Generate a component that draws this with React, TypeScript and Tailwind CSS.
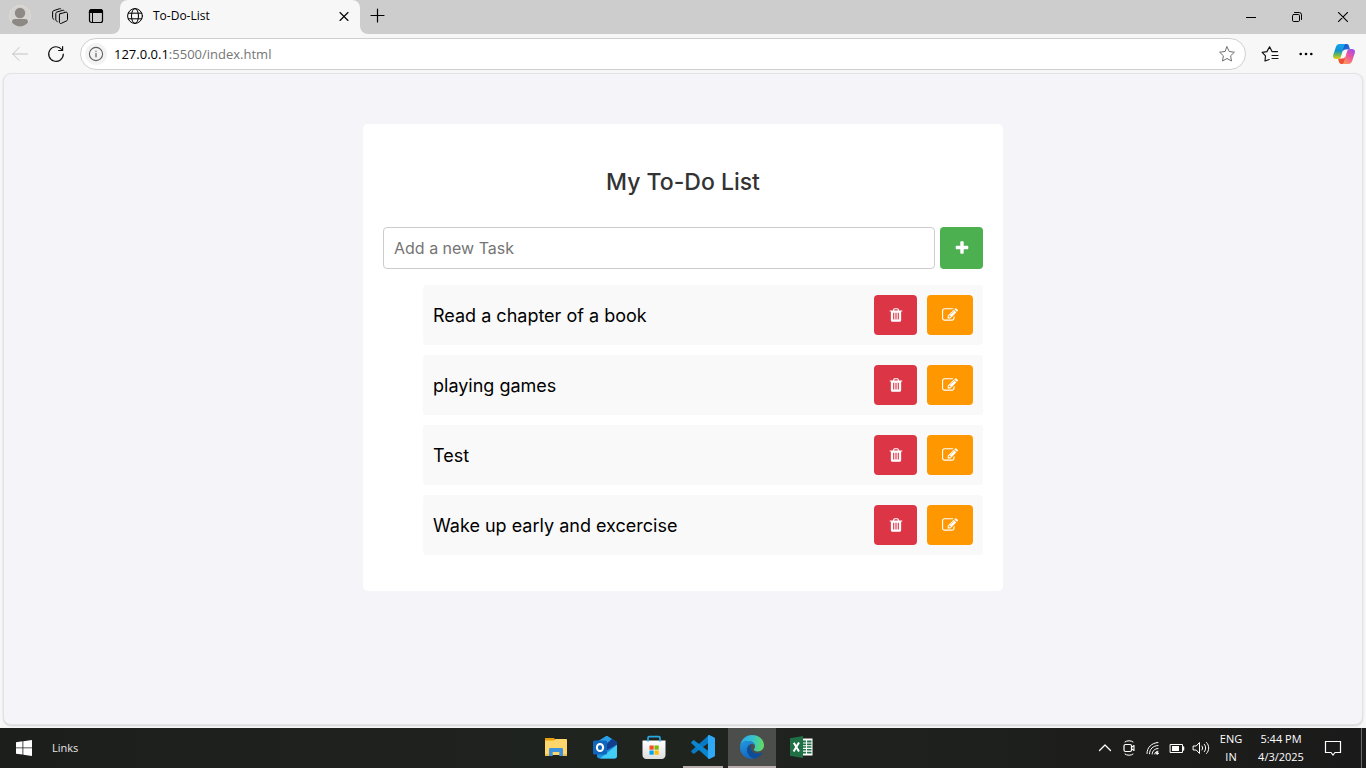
import { useState } from "react";
import type { ReactNode } from "react";

const UI_FONT = "font-['Segoe_UI','Open_Sans',sans-serif]";

function GlyphIcon({ d }: { d: string }) {
  return (
    <svg viewBox="0 0 1792 1792" className="size-4 fill-current" aria-hidden="true">
      <path d={d} />
    </svg>
  );
}

const PLUS =
  "M1600 736v192q0 40-28 68t-68 28h-416v416q0 40-28 68t-68 28h-192q-40 0-68-28t-28-68v-416h-416q-40 0-68-28t-28-68v-192q0-40 28-68t68-28h416v-416q0-40 28-68t68-28h192q40 0 68 28t28 68v416h416q40 0 68 28t28 68z";
const TRASH =
  "M704 1376v-704q0-14-9-23t-23-9h-64q-14 0-23 9t-9 23v704q0 14 9 23t23 9h64q14 0 23-9t9-23zm256 0v-704q0-14-9-23t-23-9h-64q-14 0-23 9t-9 23v704q0 14 9 23t23 9h64q14 0 23-9t9-23zm256 0v-704q0-14-9-23t-23-9h-64q-14 0-23 9t-9 23v704q0 14 9 23t23 9h64q14 0 23-9t9-23zm-544-992h448l-48-117q-7-9-17-11h-317q-10 2-17 11zm928 32v64q0 14-9 23t-23 9h-96v948q0 83-47 143.5t-113 60.5h-832q-66 0-113-58.5t-47-141.5v-952h-96q-14 0-23-9t-9-23v-64q0-14 9-23t23-9h309l70-167q15-37 54-63t79-26h320q40 0 79 26t54 63l70 167h309q14 0 23 9t9 23z";
const EDIT =
  "M888 1184l116-116-152-152-116 116v56h96v96h56zm440-720q-16-16-33 1l-350 350q-17 17-1 33t33-1l350-350q17-17 1-33zm80 594v190q0 119-84.5 203.5t-203.5 84.5h-832q-119 0-203.5-84.5t-84.5-203.5v-832q0-119 84.5-203.5t203.5-84.5h832q63 0 117 25 15 7 18 23 3 17-9 29l-49 49q-14 14-32 8-23-6-45-6h-832q-66 0-113 47t-47 113v832q0 66 47 113t113 47h832q66 0 113-47t47-113v-126q0-13 9-22l64-64q15-15 35-7t20 29zm-96-738l288 288-672 672h-288v-288zm444 132l-92 92-288-288 92-92q28-28 68-28t68 28l152 152q28 28 28 68t-28 68z";

function LineIcon({ children, className = "size-4", box = 16 }: { children: ReactNode; className?: string; box?: number }) {
  return (
    <svg
      viewBox={`0 0 ${box} ${box}`}
      className={`shrink-0 ${className}`}
      fill="none"
      stroke="currentColor"
      strokeLinecap="round"
      strokeLinejoin="round"
      aria-hidden="true"
    >
      {children}
    </svg>
  );
}

function IconButton({ label, className = "", children }: { label: string; className?: string; children: ReactNode }) {
  return (
    <button type="button" aria-label={label} className={`flex shrink-0 items-center justify-center ${className}`}>
      {children}
    </button>
  );
}

function TabStrip() {
  return (
    <header className="flex h-[34px] bg-[linear-gradient(#cdcdcd_50%,#f7f7f7_50%)] text-black">
      <div className="flex w-[120px] items-center rounded-br-lg bg-[#cdcdcd] pb-0.5 pl-0.5">
        <IconButton label="Profile" className="w-9">
          <svg viewBox="0 0 22 22" className="size-[22px]" aria-hidden="true">
            <circle cx="11" cy="11" r="10.5" fill="#d5d2cf" stroke="#dedbd8" />
            <circle cx="11" cy="8" r="5.2" fill="#8d8985" />
            <path d="M2.9 17.2c0-2 1.3-3.2 3.2-3.2h9.8c1.900 0 3.200 1.200 3.200 3.200-1.800 2.600-4.800 4.300-8.100 4.300s-6.300-1.700-8.100-4.300z" fill="#8d8985" />
          </svg>
        </IconButton>
        <IconButton label="Workspaces" className="w-11">
          <LineIcon className="size-[18px]" box={18}>
            <path d="M9 6.800l5.800-1.600c.9-.2 1.700.4 1.700 1.300v6c0 .7-.4 1.200-1 1.400l-5.300 2.500c-.9.400-1.800-.2-1.800-1.200V8c0-.6.200-1 .6-1.200z" />
            <path d="M6.300 14.500l-.9-.6c-.4-.2-.6-.6-.6-1V6.500c0-.6.400-1.200 1-1.400l6-1.800c.5-.2 1 0 1.300.3" />
            <path d="M3 12.500l-.800-.7c-.4-.300-.6-.700-.6-1.100V5c0-.6.4-1.100 1-1.300L8.600 1.700c.5-.1.900 0 1.200.2" />
          </LineIcon>
        </IconButton>
        <IconButton label="Tab actions" className="w-7">
          <LineIcon>
            <rect x="1.500" y="1.500" width="13" height="13" rx="2" strokeWidth="1.200" />
            <path d="M1.500 3.500a2 2 0 0 1 2-2h9a2 2 0 0 1 2 2v1h-13z" fill="currentColor" />
            <path d="M4.500 5v9.300" />
          </LineIcon>
        </IconButton>
      </div>
      <div className="flex w-60 items-center rounded-t-lg bg-[#f7f7f7] pb-0.5 pl-[7px] pr-2">
        <LineIcon>
          <circle cx="8" cy="8" r="7.400" />
          <ellipse cx="8" cy="8" rx="3.500" ry="7.400" />
          <path d="M1.300 5.200h13.400M1.300 10.800h13.400" />
        </LineIcon>
        <span className={`flex-1 pl-2.5 text-[12px] leading-4 ${UI_FONT}`}>To-Do-List</span>
        <IconButton label="Close tab" className="size-4">
          <LineIcon>
            <path d="M4 4.500l8 8M12 4.500l-8 8" strokeWidth="1.100" />
          </LineIcon>
        </IconButton>
      </div>
      <div className="flex flex-1 items-center justify-between rounded-bl-lg bg-[#cdcdcd]">
        <IconButton label="New tab" className="ml-2.5 size-4 pb-0.5">
          <LineIcon>
            <path d="M7.500 1v13M1 7.500h13" strokeWidth="1.200" />
          </LineIcon>
        </IconButton>
        <div className="flex">
          <IconButton label="Minimize" className="h-8 w-[46px]">
            <svg viewBox="0 0 10 10" className="size-2.5" aria-hidden="true">
              <path d="M0 5.500h10" stroke="#000" />
            </svg>
          </IconButton>
          <IconButton label="Restore" className="h-8 w-[46px]">
            <LineIcon className="size-2.5" box={10}>
              <rect x=".5" y="2.500" width="7" height="7" rx="1.200" />
              <path d="M2.500.5h4.700a2.300 2.300 0 0 1 2.300 2.300v4.700" />
            </LineIcon>
          </IconButton>
          <IconButton label="Close" className="h-8 w-[46px]">
            <LineIcon className="size-2.5" box={10}>
              <path d="M.3.3l9.400 9.400M9.700.3L.3 9.700" strokeWidth="1.100" />
            </LineIcon>
          </IconButton>
        </div>
      </div>
    </header>
  );
}

function CopilotLogo() {
  return (
    <svg viewBox="0 0 22 20" className="h-5 w-[22px]" aria-hidden="true">
      <defs>
        <linearGradient id="cpA" x1="0" y1="0" x2="0" y2="1">
          <stop offset="0" stopColor="#14a5f3" />
          <stop offset=".45" stopColor="#1292ce" />
          <stop offset=".75" stopColor="#76bd4b" />
          <stop offset="1" stopColor="#f2cc12" />
        </linearGradient>
        <linearGradient id="cpB" x1=".8" y1="0" x2=".2" y2="1">
          <stop offset="0" stopColor="#a24cf0" />
          <stop offset=".45" stopColor="#ec569d" />
          <stop offset="1" stopColor="#ff9a58" />
        </linearGradient>
        <linearGradient id="cpC" x1="0" y1="0" x2="1" y2="1">
          <stop offset="0" stopColor="#1b4cc0" />
          <stop offset="1" stopColor="#237fe9" />
        </linearGradient>
      </defs>
      <path d="M11.500 0h2.300c1.200 0 1.900.8 2.200 1.900L17 5.500h-3.500c-1.500 0-2.300.8-2.700 2.200L9 6z" fill="url(#cpC)" />
      <path d="M10.500 20H8.200c-1.200 0-1.900-.8-2.200-1.900L5 14.500h3.500c1.500 0 2.300-.8 2.700-2.200L13 14z" fill="#ee5038" />
      <path d="M6.500 0h6.800c-1.200 0-1.800.9-2.200 2.100L8 12.400c-.5 1.600-1.400 2.600-3 2.600H3c-2.300 0-3.400-1.500-2.800-3.900L2.700 3.500C3.400 1.300 4.500 0 6.500 0z" fill="url(#cpA)" />
      <path d="M15.500 20H8.700c1.200 0 1.800-.9 2.200-2.100L14 7.600c.5-1.600 1.400-2.600 3-2.600h2c2.300 0 3.400 1.500 2.800 3.900l-2.500 7.600c-.7 2.200-1.800 3.500-3.800 3.500z" fill="url(#cpB)" />
      <path d="M11.300 5.800h3.200c-.6.500-.9 1.200-1.200 2.200l-1.900 6.200H7.300c.7-.4 1-1.100 1.300-2l1.700-5.400c.2-.6.500-1 1-1z" fill="#f7f7f7" />
    </svg>
  );
}

function Toolbar() {
  return (
    <nav aria-label="Browser" className="flex items-center bg-[#f7f7f7] pb-[3px] pl-0.5 pr-1 pt-1 text-[#111]">
      <IconButton label="Back" className="w-9 text-[#c3c3c3]">
        <LineIcon>
          <path d="M15.500 8H.8M7.200 1.500L.7 8l6.500 6.500" />
        </LineIcon>
      </IconButton>
      <IconButton label="Refresh" className="mr-1.5 w-9">
        <LineIcon className="size-[18px]" box={18}>
          <path d="M16.300 9A7.300 7.300 0 1 1 14.700 4.500M15.600 1.500v4h-4" strokeWidth="1.200" />
        </LineIcon>
      </IconButton>
      <div className="flex h-8 flex-1 items-center rounded-full border border-[#cfcfcf] bg-white pl-1 pr-2.5">
        <IconButton label="Site information" className="size-[22px] rounded-full bg-[#f3f3f3] text-[#616161]">
          <LineIcon>
            <circle cx="8" cy="8" r="6.600" strokeWidth="1.100" />
            <path d="M8 7.300v3.500M8 5v.3" strokeWidth="1.200" />
          </LineIcon>
        </IconButton>
        <div className={`flex-1 pl-[7px] text-[13px] leading-5 text-[#767676] ${UI_FONT}`}>
          <span className="text-black">127.0.0.1</span>:5500/index.html
        </div>
        <IconButton label="Add to favorites" className="size-4 text-[#707070]">
          <LineIcon className="size-4">
            <path d="M8 .8l2.200 4.700 5.200.7-3.800 3.600.9 5.200L8 12.500 3.500 15l.9-5.200L.6 6.200l5.200-.7z" />
          </LineIcon>
        </IconButton>
      </div>
      <div className="ml-1.5 flex">
        <IconButton label="Favorites" className="w-9">
          <LineIcon className="size-[18px]" box={18}>
            <path d="M8.200 14.500L4 16l.5-5.200L1.200 7.300l4.700-.7 2.700-4.800 2.400 4.800h5.500M11 10.500h6M11 13.500h6" strokeWidth="1.200" />
          </LineIcon>
        </IconButton>
        <IconButton label="Settings and more" className="w-9">
          <svg viewBox="0 0 16 16" className="size-4" aria-hidden="true">
            <circle cx="2.700" cy="8" r="1.300" />
            <circle cx="8" cy="8" r="1.300" />
            <circle cx="13.300" cy="8" r="1.300" />
          </svg>
        </IconButton>
        <IconButton label="Copilot" className="ml-0.5 w-9">
          <CopilotLogo />
        </IconButton>
      </div>
    </nav>
  );
}

function TodoApp() {
  const [tasks, setTasks] = useState(["Read a chapter of a book", "playing games", "Test", "Wake up early and excercise"]);
  const [draft, setDraft] = useState("");

  const addTask = () => {
    if (draft.trim()) {
      setTasks([...tasks, draft.trim()]);
      setDraft("");
    }
  };

  return (
    <main className="mx-[3px] mb-[3px] flex-1 rounded-lg border border-[#e3e3e5] bg-[#f4f4f9] pb-12 pt-[50px] shadow-[0_1px_2px_rgba(0,0,0,0.15)] font-['Inter',sans-serif]">
      <section className="mx-auto max-w-[640px] rounded-[5px] bg-white px-5 pb-9 pt-11">
        <h1 className="text-center text-[23px] leading-[29px] font-medium text-[#333]">My To-Do List</h1>
        <form
          className="mt-[30px] flex gap-[5px]"
          onSubmit={(e) => {
            e.preventDefault();
            addTask();
          }}
        >
          <input
            type="text"
            aria-label="Add a new Task"
            placeholder="Add a new Task"
            value={draft}
            onChange={(e) => setDraft(e.target.value)}
            className="h-[42px] min-w-0 flex-1 rounded border border-[#ccc] bg-white px-2.5 text-base text-black placeholder:text-[#757575]"
          />
          <button type="submit" aria-label="Add task" className="flex w-[43px] items-center justify-center rounded bg-[#4caf50] text-white">
            <GlyphIcon d={PLUS} />
          </button>
        </form>
        <ul className="mt-4 flex flex-col gap-2.5 pl-10">
          {tasks.map((task, i) => (
            <li key={i} className="flex items-center gap-2.5 rounded bg-[#f9f9f9] p-2.5">
              <span className="flex-1 pt-0.5 text-lg leading-6 text-black">{task}</span>
              <button
                type="button"
                aria-label={`Delete ${task}`}
                onClick={() => setTasks(tasks.filter((_, n) => n !== i))}
                className="flex h-10 w-[43px] items-center justify-center rounded bg-[#dc3545] text-white"
              >
                <GlyphIcon d={TRASH} />
              </button>
              <button type="button" aria-label={`Edit ${task}`} className="flex h-10 w-[46px] items-center justify-center rounded bg-[#ff9800] text-white">
                <GlyphIcon d={EDIT} />
              </button>
            </li>
          ))}
        </ul>
      </section>
    </main>
  );
}

function ExplorerLogo() {
  return (
    <svg viewBox="0 0 24 24" className="size-6" aria-hidden="true">
      <path d="M1 3.500C1 3 1.500 3 2 3h8l1.500 2H22c.5 0 1 .3 1 1v3H1z" fill="#e8a00c" />
      <path d="M1 5.500h9L11.500 4H22c.6 0 1 .4 1 1v15H1z" fill="#ffd66b" />
      <path d="M5 21v-6.500c0-.8.500-1.500 1.500-1.500h11c1 0 1.500.7 1.500 1.500V21h-3.700v-4H8.700v4z" fill="#3f93dc" />
      <path d="M1 19h4v2H1zM19 19h4v2h-4z" fill="#f0bd45" />
    </svg>
  );
}

function OutlookLogo() {
  return (
    <svg viewBox="0 0 26 26" className="size-[26px]" aria-hidden="true">
      <path d="M5 8l8.500-5.500c1-.6 1.500-.6 2.500 0L25 8v6L15 19 5 12z" fill="#1878cf" />
      <path d="M6 7.300l7.500-4.800c1-.6 1.500-.6 2.500 0l4 2.400L10 12z" fill="#2a9fe6" />
      <path d="M20 5l5 3v5l-10 6-6-3.500z" fill="#123f8d" />
      <path d="M5 14l8 3.500L25 10.500V22c0 1.500-1 2.500-2.500 2.500h-15C6 24.500 5 23.500 5 22z" fill="#1c8fe0" />
      <path d="M8 24.500L25 11v11c0 1.500-1 2.500-2.500 2.500z" fill="#42cdf5" />
      <rect x="1" y="6.500" width="14" height="14" rx="1.500" fill="#1066bd" />
      <ellipse cx="8" cy="13.500" rx="3.100" ry="3.600" fill="none" stroke="#fff" strokeWidth="2" />
    </svg>
  );
}

function StoreLogo() {
  return (
    <svg viewBox="0 0 26 26" className="size-[26px]" aria-hidden="true">
      <defs>
        <linearGradient id="bag" x1="0" y1="0" x2="0" y2="1">
          <stop offset="0" stopColor="#fff" />
          <stop offset="1" stopColor="#dedede" />
        </linearGradient>
      </defs>
      <path d="M1.500 6.500h23V21c0 2.300-1.400 4-4 4h-15c-2.600 0-4-1.700-4-4z" fill="url(#bag)" />
      <path d="M7 7.500V4c0-.8.500-1.300 1.300-1.300h9.400c.8 0 1.300.5 1.300 1.300v3.500" fill="none" stroke="#28a8e0" strokeWidth="1.700" />
      <path d="M8.500 11.500h4.200v4.200H8.500z" fill="#f25022" />
      <path d="M13.500 11.500h4.200v4.200h-4.200z" fill="#7fba00" />
      <path d="M8.500 16.500h4.200v4.200H8.500z" fill="#00a4ef" />
      <path d="M13.500 16.500h4.200v4.200h-4.200z" fill="#ffb900" />
    </svg>
  );
}

function VsCodeLogo() {
  return (
    <svg viewBox="0 0 24 24" className="size-6" aria-hidden="true">
      <path d="M23 2.500L18 0 .6 15.500c-.5.500-.5 1.200 0 1.700L2 18.400c.4.400 1 .4 1.400.1L22 4.500z" fill="#0879c4" />
      <path d="M23 21.500L18 24 .6 8.500c-.5-.5-.5-1.200 0-1.700L2 5.600c.4-.4 1-.4 1.400-.1L22 19.500z" fill="#0a86d0" />
      <path d="M17.500 23.800c-.7-.2-.6-.8-.6-1.500V1.700c0-.7 0-1.300.6-1.500.4-.2.700-.2 1.100 0l4.700 2.200c.5.300.7.700.7 1.200v16.800c0 .5-.2.900-.7 1.200l-4.700 2.200c-.4.200-.7.200-1.100 0z" fill="#2fa9f5" />
    </svg>
  );
}

function EdgeLogo() {
  return (
    <svg viewBox="0 0 24 24" className="size-6" aria-hidden="true">
      <defs>
        <linearGradient id="edA" x1="0" y1=".4" x2="1" y2=".5">
          <stop offset="0" stopColor="#2aa7e8" />
          <stop offset=".5" stopColor="#35c1d0" />
          <stop offset="1" stopColor="#62dc5d" />
        </linearGradient>
        <linearGradient id="edB" x1=".2" y1="0" x2=".6" y2="1">
          <stop offset="0" stopColor="#1f96df" />
          <stop offset="1" stopColor="#1565c0" />
        </linearGradient>
      </defs>
      <path d="M.2 10.600C.9 4.500 5.900 0 12 0c7 0 12 4.800 12 10.300 0 3.800-2.900 6.200-6.200 6.200-2.600 0-4-1-4-1.900 0-.8 1.200-1.300 1.200-3.200 0-2.700-2.600-5.400-6.600-5.400C4.400 6 1.500 8 .2 10.600z" fill="url(#edA)" />
      <path d="M.1 11.500C.6 8.200 3.900 6 8 6c4.300 0 7 2.700 7 5.300-.4-1.400-1.700-2.300-3.200-2.300-3 0-5.100 3.100-4.600 6.500.5 3.800 3.400 7.100 7.200 8.200C6.300 25.300-.6 19.300.1 11.500z" fill="url(#edB)" />
      <path d="M8.600 11.100c-3.300 3.300-1.300 11.100 5.800 12.600 3.500-.7 6.200-2.700 7.900-5.600.3-.5-.2-.9-.7-.6-4.600 2.300-9.700.2-10.800-3.800-.4-1.500 0-2.600.5-3.700-1.200 0-2 .4-2.700 1.100z" fill="#0d4e9b" />
    </svg>
  );
}

function ExcelLogo() {
  return (
    <svg viewBox="0 0 24 24" className="size-6" aria-hidden="true">
      <rect x="12" y="3.500" width="11.500" height="17" fill="#fff" />
      <path d="M13 5.500h9.500v13H13z" fill="#1f7145" />
      <path d="M13 8h10M13 10.700h10M13 13.400h10M13 16.100h10M17.500 5v14" stroke="#fff" strokeWidth="1.100" />
      <path d="M1 3.300L14 1v22L1 20.700z" fill="#1f7145" />
      <path d="M4.800 7.800l5.200 8.600M10 7.600L4.600 16.400" stroke="#fff" strokeWidth="2" />
    </svg>
  );
}

function TaskbarApp({ label, running = false, active = false, children }: { label: string; running?: boolean; active?: boolean; children: ReactNode }) {
  return (
    <button
      type="button"
      aria-label={label}
      className={`flex w-12 flex-col items-center ${active ? "bg-[#4c4e4c]" : ""}`}
    >
      <span className="flex flex-1 items-center">{children}</span>
      <span className={`h-0.5 ${active ? "w-full bg-[#b9adad]" : running ? "w-10 bg-[#b9adad]" : "w-10"}`} />
    </button>
  );
}

function Taskbar() {
  return (
    <footer
      className={`grid h-10 grid-cols-[1fr_auto_1fr] bg-linear-to-r from-[#1c1e1c] via-[#20241f] to-[#1b1a1a] text-[11px] leading-[18px] text-white ${UI_FONT}`}
    >
      <div className="flex items-center">
        <IconButton label="Start" className="h-10 w-12">
          <svg viewBox="0 0 16 16" className="size-4 fill-white" aria-hidden="true">
            <path d="M0 2.200l6.500-.9v6.200H0zM7.300 1.200L16 0v7.500H7.300zM0 8.300h6.500v6.200L0 13.700zM7.300 8.300H16V16l-8.700-1.300z" />
          </svg>
        </IconButton>
        <a href="#links" className="pl-1 text-[#e6e6e6]">
          Links
        </a>
      </div>
      <div className="flex gap-px pr-[9px]">
        <TaskbarApp label="File Explorer">
          <ExplorerLogo />
        </TaskbarApp>
        <TaskbarApp label="Outlook">
          <OutlookLogo />
        </TaskbarApp>
        <TaskbarApp label="Microsoft Store">
          <StoreLogo />
        </TaskbarApp>
        <TaskbarApp label="Visual Studio Code" running>
          <VsCodeLogo />
        </TaskbarApp>
        <TaskbarApp label="Microsoft Edge" active>
          <EdgeLogo />
        </TaskbarApp>
        <TaskbarApp label="Excel">
          <ExcelLogo />
        </TaskbarApp>
      </div>
      <div className="flex items-center justify-end">
        <IconButton label="Show hidden icons" className="w-6">
          <LineIcon>
            <path d="M2.500 10.500L8 5l5.500 5.500" strokeWidth="1.300" />
          </LineIcon>
        </IconButton>
        <IconButton label="Meet Now" className="w-6">
          <LineIcon>
            <path d="M4 1.900C6 .3 10 .3 12 1.900M4 14.100c2 1.600 6 1.600 8 0" />
            <rect x="3" y="4.500" width="7.500" height="7" rx="1.500" strokeWidth="1.200" />
            <path d="M10.500 7.200l2.500-1.700v5l-2.500-1.700" strokeWidth="1.100" />
          </LineIcon>
        </IconButton>
        <IconButton label="Network" className="w-6">
          <LineIcon>
            <path d="M2 13.500C2 7.500 6.500 3 13 2.500M4.500 13.800c0-4.800 3.500-8 8.500-8.300M7.200 14c0-3 2.300-5.300 5.800-5.500M9.800 14c0-1.600 1.200-2.700 3.200-2.800" strokeWidth="1" />
            <circle cx="12.200" cy="13.300" r="1" fill="currentColor" />
          </LineIcon>
        </IconButton>
        <IconButton label="Battery" className="w-6">
          <LineIcon>
            <rect x="1.500" y="4.500" width="12" height="8" />
            <path d="M14.500 7v3" strokeWidth="1.500" />
            <path d="M3 6h7v5H3z" fill="currentColor" strokeWidth="0" />
          </LineIcon>
        </IconButton>
        <IconButton label="Volume" className="w-6">
          <LineIcon className="size-[18px]" box={18}>
            <path d="M1.500 7h2.700l3.300-3.500v11L4.200 11H1.500zM10 7c.8 1 .8 3 0 4M12.300 5.300c1.800 2 1.800 5.400 0 7.400M14.500 3.500c3 3 3 8 0 11" />
          </LineIcon>
        </IconButton>
        <div className="w-9 text-center">
          <div>ENG</div>
          <div>IN</div>
        </div>
        <div className="w-16 text-center">
          <div>5:44 PM</div>
          <div>4/3/2025</div>
        </div>
        <IconButton label="Notifications" className="ml-0.5 h-10 w-9">
          <LineIcon className="size-[18px]" box={18}>
            <path d="M1.500 2.500h15v11H11l-2 2.500-2-2.500H1.500z" strokeWidth="1.200" strokeLinejoin="miter" />
          </LineIcon>
        </IconButton>
        <button type="button" aria-label="Show desktop" className="ml-2.5 h-10 w-[5px] border-l border-[#6a6a6a]" />
      </div>
    </footer>
  );
}

export default function App() {
  return (
    <div className="flex min-h-screen flex-col bg-[#f7f7f7]">
      <TabStrip />
      <Toolbar />
      <TodoApp />
      <Taskbar />
    </div>
  );
}
